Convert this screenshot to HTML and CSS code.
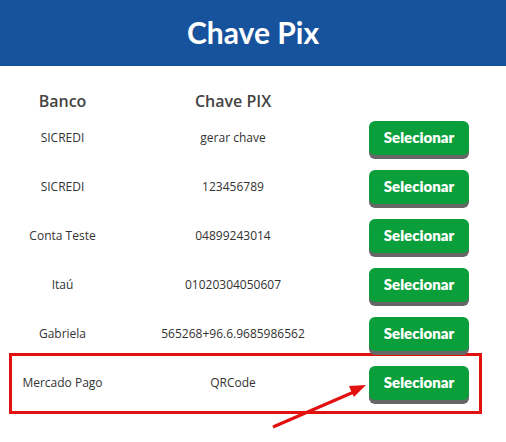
FILE: index.html
```html
<!DOCTYPE html>
<html>
<head>
  <meta charset="utf-8">
  <meta name="viewport" content="width=device-width, initial-scale=1">
  <title>Chave Pix</title>
  <link rel="stylesheet" href="styles.css">
</head>
<body>
  <header class="top">
    <h1>Chave Pix</h1>
  </header>
  <main class="keys">
    <div class="row head">
      <b>Banco</b>
      <b>Chave PIX</b>
      <b></b>
    </div>
    <div class="row">
      <span>SICREDI</span>
      <span>gerar chave</span>
      <span><button>Selecionar</button></span>
    </div>
    <div class="row">
      <span>SICREDI</span>
      <span>123456789</span>
      <span><button>Selecionar</button></span>
    </div>
    <div class="row">
      <span>Conta Teste</span>
      <span>04899243014</span>
      <span><button>Selecionar</button></span>
    </div>
    <div class="row">
      <span>Itaú</span>
      <span>01020304050607</span>
      <span><button>Selecionar</button></span>
    </div>
    <div class="row">
      <span>Gabriela</span>
      <span>565268+96.6.9685986562</span>
      <span><button>Selecionar</button></span>
    </div>
    <div class="mark">
      <div class="row">
        <span>Mercado Pago</span>
        <span>QRCode</span>
        <span><button>Selecionar</button></span>
      </div>
    </div>
  </main>
  <svg class="arrow" width="115" height="60" viewBox="0 0 115 60">
    <line x1="13" y1="52" x2="95" y2="16.5" stroke="#e31010" stroke-width="3"/>
    <polygon points="106,10 93.9,22.1 88.9,11.1" fill="#e31010"/>
  </svg>
</body>
</html>
```

FILE: styles.css
```css
body {
  margin: 0;
  font-family: 'Open Sans', sans-serif;
  color: #333;
  background: #fff;
}

.top {
  background: #17539c;
  height: 66px;
  display: flex;
  align-items: center;
  justify-content: center;
}

.top h1 {
  margin: 0 0 2px;
  color: #fff;
  font-family: 'Lato', sans-serif;
  font-weight: 700;
  font-size: 30px;
}

.keys {
  padding: 22px 0 0 10px;
}

.row {
  display: grid;
  grid-template-columns: 105px 236px 136px;
  width: 477px;
  height: 49px;
  align-items: center;
  text-align: center;
  font-size: 12px;
}

.row.head {
  height: 25px;
}

.row.head b {
  font-weight: 600;
  font-size: 16px;
  color: #444;
}

.row button {
  width: 100px;
  height: 34px;
  border: 0;
  border-radius: 6px;
  background: #0a9f3b;
  box-shadow: 0 4px 0 #666;
  color: #fff;
  font-family: 'Lato', sans-serif;
  font-weight: 800;
  font-size: 15px;
  padding: 0 0 2px;
}

/* red highlight round the last row */
.mark {
  box-sizing: border-box;
  width: 473px;
  height: 61px;
  margin: -5px 0 0 -1px;
  padding: 2px 0 0 1px;
  border: 3px solid #e31010;
}

.mark .row {
  margin-left: -3px;
}

.arrow {
  position: absolute;
  left: 260px;
  top: 375px;
}
```
